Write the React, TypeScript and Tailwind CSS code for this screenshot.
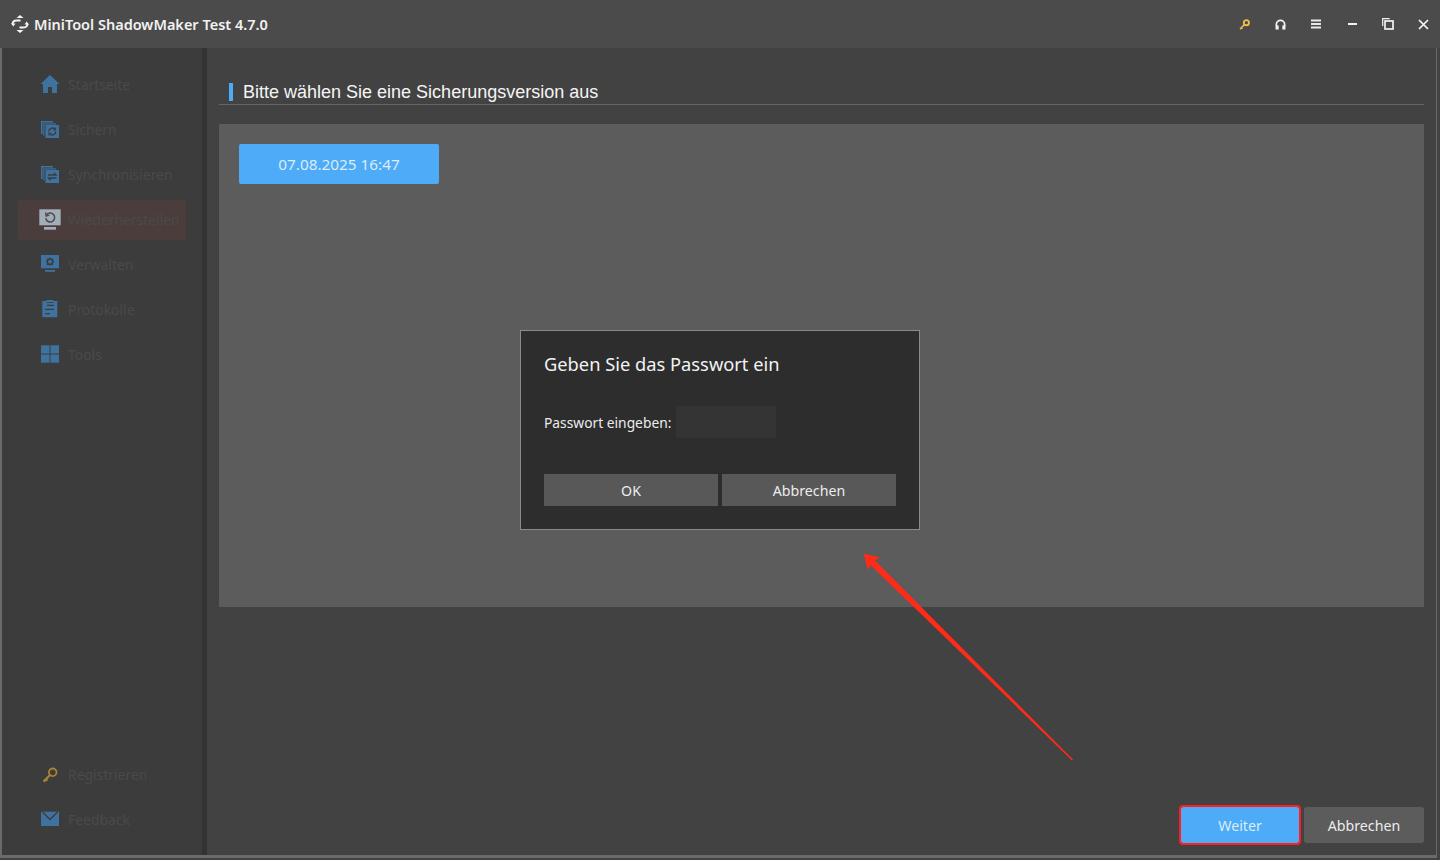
import React from "react";

const B = "#3f729f";

function Home() {
  return (
    <svg width="20" height="20" viewBox="0 0 20 20" fill={B}>
      <path d="M10 0 L19.500 9 L17 9 L17 18 L12 18 L12 12 L8 12 L8 18 L3 18 L3 9 L0.500 9 Z" />
    </svg>
  );
}
function Backup() {
  return (
    <svg width="20" height="20" viewBox="0 0 20 20" fill="none">
      <path d="M1 1h12v1.500H2.500V14H1z" fill={B} />
      <path d="M3.200 3.200H16v1.300H4.500V15.500H3.200z" fill={B} opacity="0.9" />
      <rect x="5.500" y="5" width="13.500" height="13" fill={B} />
      <path d="M8.700 11.500a3.500 3.500 0 0 1 6-2.400M15.800 11.500a3.500 3.500 0 0 1-6 2.400" stroke="#3c3c3c" strokeWidth="1.400" />
      <path d="M15.500 7.500V10h-2.500M9 15.500V13h2.500" stroke="#3c3c3c" strokeWidth="1.200" />
    </svg>
  );
}
function Sync() {
  return (
    <svg width="20" height="20" viewBox="0 0 20 20" fill="none">
      <path d="M1 1h12v1.500H2.500V14H1z" fill={B} />
      <path d="M3.200 3.200H16v1.300H4.500V15.500H3.200z" fill={B} opacity="0.9" />
      <rect x="5.500" y="5" width="13.500" height="13" fill={B} />
      <path d="M8 10h8l-2.200-2.200M16.500 13H8.500l2.200 2.200" stroke="#3c3c3c" strokeWidth="1.300" />
    </svg>
  );
}
function Restore() {
  return (
    <svg width="22" height="22" viewBox="0 0 22 22" fill="none" className="-mr-px">
      <rect x="0.300" y="0.300" width="21.400" height="16" fill="#a3adb8" />
      <rect x="5" y="18" width="12" height="2.700" fill="#a3adb8" />
      <path d="M7.300 6.200a4.500 4.500 0 1 1-.6 3" stroke="#4a4a4c" strokeWidth="1.500" />
      <path d="M6.600 3.400l.5 3.700 3.300-1" stroke="#4a4a4c" strokeWidth="1.200" />
    </svg>
  );
}
function Manage() {
  return (
    <svg width="20" height="20" viewBox="0 0 20 20" fill="none">
      <rect x="1" y="0" width="18" height="13.300" fill={B} />
      <rect x="5" y="15" width="10" height="1.800" fill={B} />
      <circle cx="10" cy="6.700" r="2.600" stroke="#3c3c3c" strokeWidth="1.500" />
      <path d="M10 2.600V4M10 9.400v1.400M5.900 6.700h1.400M12.700 6.700h1.400M7 3.800l1 1M12 8.700l1 1M13 3.800l-1 1M8 8.700l-1 1" stroke="#3c3c3c" strokeWidth="1.300" />
    </svg>
  );
}
function Log() {
  return (
    <svg width="20" height="20" viewBox="0 0 20 20" fill="none">
      <path d="M2.300 1h4.200V0h7v1H17.300v16.300h-15z" fill={B} />
      <path d="M6.500 2.500h7" stroke="#3c3c3c" strokeWidth="0.800" />
      <path d="M7 5.300h7M5 9.300h9M5 13.700h5" stroke="#3c3c3c" strokeWidth="1.200" />
    </svg>
  );
}
function Tools() {
  return (
    <svg width="20" height="20" viewBox="0 0 20 20" fill={B}>
      <rect x="1" y="0.300" width="8.500" height="8.200" />
      <rect x="10.500" y="0.300" width="8.500" height="8.200" />
      <rect x="1" y="9.500" width="8.500" height="8.200" />
      <rect x="10.500" y="9.500" width="8.500" height="8.200" />
    </svg>
  );
}
function KeyIcon({ color, size, sw, className }: { color: string; size: number; sw: number; className?: string }) {
  return (
    <svg width={size} height={size} viewBox="0 0 16 16" fill="none" className={className}>
      <circle cx="10.700" cy="5.300" r="3.800" stroke={color} strokeWidth={sw} />
      <path d="M8 8L1.500 14.500M3.800 12.200l1.600 1.600M2.200 13.800l1 1" stroke={color} strokeWidth="2.200" />
    </svg>
  );
}
function Mail() {
  return (
    <svg width="20" height="20" viewBox="0 0 20 20" fill="none">
      <path d="M1 1.700h18V16H1z" fill={B} />
      <path d="M2.500 2l7.500 7.500L17.500 2" stroke="#3c3c3c" strokeWidth="1.300" />
    </svg>
  );
}
function Logo() {
  return (
    <svg width="20" height="20" viewBox="0 0 20 20" fill="none">
      <path d="M10 1l3.500 3h-7zM10 19l-3.500-3h7z" fill="#f5f5f5" />
      <path d="M2.500 10a4 4 0 0 1 4-3.500h4" stroke="#f5f5f5" strokeWidth="2" />
      <path d="M17.500 10a4 4 0 0 1-4 3.500h-4" stroke="#f5f5f5" strokeWidth="2" />
      <path d="M1 9.500h4.500l-2.200 3zM19 10.500h-4.500l2.200-3z" fill="#f5f5f5" />
    </svg>
  );
}

const NAV: { label: string; icon: React.ReactNode; active?: boolean }[] = [
  { label: "Startseite", icon: <Home /> },
  { label: "Sichern", icon: <Backup /> },
  { label: "Synchronisieren", icon: <Sync /> },
  { label: "Wiederherstellen", icon: <Restore />, active: true },
  { label: "Verwalten", icon: <Manage /> },
  { label: "Protokolle", icon: <Log /> },
  { label: "Tools", icon: <Tools /> },
];

function NavRow({ label, icon, active }: { label: string; icon: React.ReactNode; active?: boolean }) {
  return (
    <div className={`flex h-10 w-[168px] items-center rounded-[3px] ${active ? "bg-[#4a3d3c]" : ""}`}>
      <div className="flex w-[50px] shrink-0 justify-end pr-2">{icon}</div>
      <span className="whitespace-nowrap text-[13.9px] text-[#4a4a4a]">{label}</span>
    </div>
  );
}

export default function App() {
  return (
    <div className="relative flex h-[860px] w-[1440px] flex-col overflow-hidden bg-[#424242] font-['Noto_Sans','Open_Sans',sans-serif]">
      {/* Title bar */}
      <div className="flex h-12 shrink-0 items-center justify-between bg-[#4b4b4b] pl-[10px]">
        <div className="flex items-center gap-[4px]">
          <Logo />
          <span className="pt-[2px] text-[14.5px] font-semibold text-[#f2f2f2]">MiniTool ShadowMaker Test 4.7.0</span>
        </div>
        <div className="flex items-center text-white">
          <div className="flex w-[36px] justify-center"><KeyIcon color="#f5bd4f" size={11} sw={2.600} /></div>
          <div className="flex w-[36px] justify-center">
            <svg width="11" height="11" viewBox="0 0 12 12" fill="none">
              <path d="M1.500 8V6a4.500 4.500 0 0 1 9 0v2" stroke="#f2f2f2" strokeWidth="1.900" />
              <rect x="0.600" y="7" width="3.400" height="4.500" fill="#f2f2f2" />
              <rect x="8" y="7" width="3.400" height="4.500" fill="#f2f2f2" />
            </svg>
          </div>
          <div className="flex w-[36px] justify-center">
            <svg width="10" height="10" viewBox="0 0 10 10" fill="#e8e8e8">
              <rect x="0" y="0.500" width="10" height="2" />
              <rect x="0" y="4" width="10" height="2" />
              <rect x="0" y="7.500" width="10" height="2" />
            </svg>
          </div>
          <div className="flex w-[36px] justify-center">
            <div className="h-[2px] w-[9px] bg-[#f2f2f2]" />
          </div>
          <div className="flex w-[36px] justify-center">
            <svg width="12" height="12" viewBox="0 0 12 12" fill="none" stroke="#f2f2f2">
              <path d="M0.700 8V0.700h7" strokeWidth="1.200" />
              <rect x="3" y="3" width="8" height="8" strokeWidth="1.700" />
            </svg>
          </div>
          <div className="flex w-[34px] justify-center">
            <svg width="11" height="11" viewBox="0 0 11 11" stroke="#f7f7f7" strokeWidth="1.700">
              <path d="M1 1l9 9M10 1l-9 9" />
            </svg>
          </div>
        </div>
      </div>

      {/* Body */}
      <div className="mb-[2px] mr-[3px] flex min-h-0 flex-1 border-b-[3px] border-l-2 border-r border-[#6a6a6a]">
        <aside className="flex w-[200px] shrink-0 flex-col justify-between bg-[#3c3c3c] pb-[15px] pl-4 pt-[17px]">
          <div className="flex flex-col gap-[5px]">
            {NAV.map((n) => (
              <NavRow key={n.label} {...n} />
            ))}
          </div>
          <div className="flex flex-col gap-[5px]">
            <NavRow label="Registrieren" icon={<KeyIcon color="#a78436" size={16} sw={1.800} className="mr-[2px]" />} />
            <NavRow label="Feedback" icon={<Mail />} />
          </div>
        </aside>
        <div className="w-[5px] shrink-0 bg-[#333333]" />

        <main className="flex min-w-0 flex-1 flex-col pl-3 pr-[12px] pt-[35px]">
          <div className="flex h-[22px] items-center border-b border-[#666666] pb-[4px] pl-[10px]">
            <div className="mr-[10px] h-[18px] w-1 bg-[#4dabf7]" />
            <span className="font-['Liberation_Sans',sans-serif] text-[18px] leading-none text-[#f5f5f5]">
              Bitte wählen Sie eine Sicherungsversion aus
            </span>
          </div>

          <div className="mt-[19px] h-[483px] shrink-0 bg-[#5c5c5c] p-5">
            <div className="flex h-10 w-[200px] items-center justify-center rounded-[2px] bg-[#4dabf7] pt-px text-[15.300px] text-[#dcecf8]">
              07.08.2025 16:47
            </div>
          </div>

          <div className="mt-auto flex justify-end gap-[5px] pb-[12px]">
            <div className="flex h-9 w-[118px] items-center justify-center rounded-[2px] bg-[#4dabf7] pt-[2px] text-[14.2px] text-[#dcecf8] outline-2 outline-offset-0 outline-[#ff1f1f]">
              Weiter
            </div>
            <div className="flex h-9 w-[120px] items-center justify-center rounded-[3px] bg-[#5c5c5c] pt-[2px] text-[14.2px] text-[#ececec]">
              Abbrechen
            </div>
          </div>
        </main>
      </div>

      {/* Dialog */}
      <div className="absolute left-[520px] top-[330px] flex h-[200px] w-[400px] flex-col border border-[#8a8a8a] bg-[#2d2d2d] px-[23px]">
        <div className="mt-[20px] text-[18.3px] leading-[26px] text-[#f2f2f2]">Geben Sie das Passwort ein</div>
        <div className="mt-[29px] flex items-center gap-[5px]">
          <span className="pt-[2px] text-[13.8px] text-[#ececec]">Passwort eingeben:</span>
          <div className="h-8 w-[100px] rounded-[3px] bg-[#343434]" />
        </div>
        <div className="mt-9 flex gap-1">
          <div className="flex h-8 w-[174px] items-center justify-center bg-[#585858] pt-px text-[14.2px] text-[#ececec]">OK</div>
          <div className="flex h-8 w-[174px] items-center justify-center bg-[#585858] pt-px text-[14.2px] text-[#ececec]">Abbrechen</div>
        </div>
      </div>

      {/* Annotation arrow */}
      <svg className="absolute left-[850px] top-[540px]" width="240" height="230" viewBox="0 0 240 230">
        <path d="M13.700 13.700L30 17.300L25 20.500L223 219.500L222 220.500L20.500 25L17.700 30Z" fill="#ff2a17" />
      </svg>
    </div>
  );
}
